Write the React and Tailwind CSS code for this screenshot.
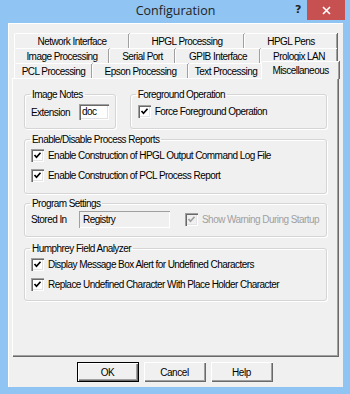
import React from 'react';

const font = { fontFamily: '"Liberation Sans", Arial, sans-serif' };

const tabRows = [
  [
    { label: 'Network Interface', w: 115 },
    { label: 'HPGL Processing', w: 115 },
    { label: 'HPGL Pens', w: 93 },
  ],
  [
    { label: 'Image Processing', w: 95 },
    { label: 'Serial Port', w: 66 },
    { label: 'GPIB Interface', w: 85 },
    { label: 'Prologix LAN', w: 77 },
  ],
  [
    { label: 'PCL Processing', w: 78 },
    { label: 'Epson Processing', w: 96 },
    { label: 'Text Processing', w: 75 },
    { label: 'Miscellaneous', w: 74, selected: true },
  ],
];

const sunken =
  'shadow-[inset_1px_1px_0_#a0a0a0,inset_2px_2px_0_#696969,inset_-1px_-1px_0_#ffffff,inset_-2px_-2px_0_#e3e3e3]';

function Check({ checked = true, disabled = false }) {
  return (
    <span
      className={`w-[13px] h-[13px] shrink-0 flex items-center justify-center ${sunken} ${disabled ? 'bg-[#f0f0f0]' : 'bg-white'}`}
    >
      {checked && (
        <svg width="13" height="13" viewBox="0 0 13 13">
          <polyline
            points="3.5,6 5.5,8.2 9.5,3.8"
            fill="none"
            stroke={disabled ? '#a0a0a0' : '#000'}
            strokeWidth="1.7"
          />
        </svg>
      )}
    </span>
  );
}

function CheckRow({ children, disabled }) {
  return (
    <div className="flex items-center gap-[4px] h-[13px]">
      <Check disabled={disabled} />
      <span className={disabled ? 'text-[#a0a0a0]' : ''}>{children}</span>
    </div>
  );
}

function Group({ title, className = '', children }) {
  return (
    <fieldset className={`border border-[#d5d5d5] rounded-[3px] shadow-[inset_1px_1px_0_#ffffff,1px_1px_0_#ffffff] ${className}`}>
      <legend className="ml-[5px] px-[2px] leading-[13px]">{title}</legend>
      {children}
    </fieldset>
  );
}

function Tab({ tab }) {
  if (tab.selected) {
    return (
      <div
        style={{ width: tab.w + 4 }}
        className="relative z-10 -ml-[2px] -mt-[2px] -mb-[1px] h-[18px] bg-[#f0f0f0] border-t border-l border-white rounded-tl-[2px] shadow-[inset_-1px_0_0_#a0a0a0,1px_0_0_#696969] flex items-start justify-center pt-[2px] leading-[13px]"
      >
        {tab.label}
      </div>
    );
  }
  return (
    <div
      style={{ width: tab.w }}
      className="h-[15px] bg-[#f0f0f0] border-t border-l border-white rounded-tl-[2px] shadow-[inset_-1px_0_0_#a0a0a0,1px_0_0_#696969] flex items-center justify-center leading-[13px]"
    >
      {tab.label}
    </div>
  );
}

function Button({ children, isDefault }) {
  return (
    <button
      className={`w-[62px] h-[20px] bg-[#f0f0f0] text-[10px] tracking-[-0.4px] text-black ${
        isDefault
          ? 'border border-black shadow-[inset_1px_1px_0_#ffffff,inset_-1px_-1px_0_#696969,inset_-2px_-2px_0_#a0a0a0]'
          : 'shadow-[inset_1px_1px_0_#ffffff,inset_-1px_-1px_0_#696969,inset_-2px_-2px_0_#a0a0a0]'
      }`}
      style={font}
    >
      {children}
    </button>
  );
}

export default function App() {
  return (
    <div
      className="w-[350px] h-[394px] bg-[#90c4f2] flex flex-col text-[10px] tracking-[-0.55px] text-black whitespace-nowrap"
      style={font}
    >
      {/* Title bar */}
      <div className="h-[23px] shrink-0 relative flex items-center justify-center">
        <span
          className="text-[12.5px] tracking-[0px] text-[#222] leading-none -mt-[1px] ml-[1px]"
          style={{ fontFamily: '"Open Sans", "Noto Sans", sans-serif' }}
        >
          Configuration
        </span>
        <span
          className="absolute left-[295px] top-[2px] text-[11px] tracking-[0px] font-bold text-[#222]"
          style={{ fontFamily: '"DejaVu Sans", sans-serif' }}
        >
          ?
        </span>
        <div className="absolute left-[307px] top-0 w-[38px] h-[20px] bg-[#c75050] flex items-center justify-center">
          <svg width="9" height="9" viewBox="0 0 9 9">
            <path d="M1 1 L8 8 M8 1 L1 8" stroke="#fff" strokeWidth="1.6" />
          </svg>
        </div>
      </div>

      {/* Client area */}
      <div className="flex-1 mr-[7px] ml-[8px] mb-[7px] bg-[#f0f0f0] shadow-[inset_1px_1px_0_#ffffff] flex flex-col pt-[10px] px-[4px]">
        {/* Tab headers */}
        <div className="flex flex-col pl-[2px]">
          {tabRows.map((row, i) => (
            <div key={i} className="flex">
              {row.map((t) => (
                <Tab key={t.label} tab={t} />
              ))}
            </div>
          ))}
        </div>

        {/* Tab panel */}
        <div className="h-[278px] w-[326px] border-t border-l border-white shadow-[inset_-1px_-1px_0_#a0a0a0,1px_1px_0_#696969] px-[11px] pt-[9px] flex flex-col">
          <div className="flex gap-[14px]">
            <Group title="Image Notes" className="w-[92px] h-[41px]">
              <div className="flex items-center pl-[6px] pt-[3px] gap-[9px]">
                <span className="w-[39px]">Extension</span>
                <span className={`w-[30px] h-[16px] bg-white leading-[16px] pl-[3px] ${sunken}`}>doc</span>
              </div>
            </Group>
            <Group title="Foreground Operation" className="w-[198px] h-[41px]">
              <div className="flex flex-col pl-[7px] pt-[4px]">
                <CheckRow>Force Foreground Operation</CheckRow>
              </div>
            </Group>
          </div>

          <Group title="Enable/Disable Process Reports" className="mt-[4px] h-[61px]">
            <div className="flex flex-col pl-[6px] pt-[3px] gap-[7px]">
              <CheckRow>Enable Construction of HPGL Output Command Log File</CheckRow>
              <CheckRow>Enable Construction of PCL Process Report</CheckRow>
            </div>
          </Group>

          <Group title="Program Settings" className="mt-[3px] h-[40px]">
            <div className="flex items-center pl-[6px] pt-[1px]">
              <span className="w-[48px]">Stored In</span>
              <span className="w-[91px] h-[17px] leading-[17px] pl-[4px] bg-[#f0f0f0] shadow-[inset_1px_1px_0_#a0a0a0,inset_-1px_-1px_0_#ffffff]">
                Registry
              </span>
              <div className="ml-[15px]">
                <CheckRow disabled>Show Warning During Startup</CheckRow>
              </div>
            </div>
          </Group>

          <Group title="Humphrey Field Analyzer" className="mt-[5px] h-[59px]">
            <div className="flex flex-col pl-[6px] pt-[3px] gap-[7px]">
              <CheckRow>Display Message Box Alert for Undefined Characters</CheckRow>
              <CheckRow>Replace Undefined Character With Place Holder Character</CheckRow>
            </div>
          </Group>
        </div>

        {/* Buttons */}
        <div className="flex justify-center gap-[5px] mt-[6px] -ml-[2px]">
          <Button isDefault>OK</Button>
          <Button>Cancel</Button>
          <Button>Help</Button>
        </div>
      </div>
    </div>
  );
}
